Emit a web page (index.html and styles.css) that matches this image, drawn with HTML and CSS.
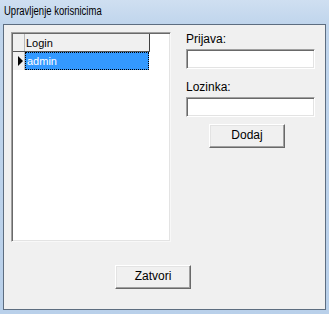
FILE: index.html
```html
<!DOCTYPE html>
<html>
<head>
<meta charset="utf-8">
<link rel="stylesheet" href="styles.css">
</head>
<body>
<div class="window">
  <div class="titlebar"><span class="title-text">Upravljenje korisnicima</span></div>
  <div class="client">
    <div class="top">
      <div class="grid">
        <div class="grid-row header">
          <div class="rowhead"></div>
          <div class="cell colhead">Login</div>
        </div>
        <div class="grid-row data">
          <div class="rowhead"><span class="arrow"></span></div>
          <div class="cell selected">admin</div>
        </div>
      </div>
      <div class="form">
        <div class="lbl">Prijava:</div>
        <div class="textbox"></div>
        <div class="lbl lbl-second">Lozinka:</div>
        <div class="textbox"></div>
        <div class="btn btn-add">Dodaj</div>
      </div>
    </div>
    <div class="bottom">
      <div class="btn btn-close">Zatvori</div>
    </div>
  </div>
</div>
</body>
</html>
```
FILE: styles.css
```css
html, body {
  margin: 0;
  padding: 0;
  background: #bcd3eb;
}
.window {
  width: 329px;
  height: 314px;
  box-sizing: border-box;
  padding: 0 3px 4px 3px;
  background: linear-gradient(#cfdff1, #c0d5ec 24px, #b9d0ea);
  font-family: "Liberation Sans", Arial, sans-serif;
  display: flex;
  flex-direction: column;
}
.titlebar {
  height: 24px;
  line-height: 23px;
  padding-left: 1px;
  font-size: 12.5px;
  color: #000;
  flex: none;
  white-space: nowrap;
}
.title-text {
  display: inline-block;
  transform: scaleX(0.76);
  transform-origin: left center;
}
.client {
  flex: 1;
  background: #f0f0f0;
  border: 1px solid #5d6d80;
  padding: 7px;
}
.top {
  display: flex;
  align-items: flex-start;
  gap: 15px;
}
.grid {
  width: 160px;
  height: 210px;
  box-sizing: border-box;
  background: #fff;
  border-top: 1px solid #a0a0a0;
  border-left: 1px solid #a0a0a0;
  border-right: 1px solid #f8f8f8;
  border-bottom: 1px solid #f8f8f8;
  box-shadow: inset 1px 1px 0 #696969, inset -1px -1px 0 #e3e3e3;
  padding: 1px 0 0 1px;
  font-size: 11px;
}
.grid-row {
  display: flex;
  width: 137px;
}
.header {
  height: 18px;
  box-sizing: border-box;
  border-bottom: 1px solid #555;
}
.rowhead {
  width: 11px;
  flex: none;
  background: #f0f0f0;
  border-right: 1px solid #b8b8b8;
  display: flex;
  align-items: center;
  justify-content: flex-end;
}
.cell {
  flex: 1;
  box-sizing: border-box;
  line-height: 16px;
  padding-left: 1px;
}
.colhead {
  background: #f0f0f0;
  border-right: 1px solid #404040;
  line-height: 18px;
}
.data {
  height: 18px;
}
.selected {
  background: #3399ff;
  color: #fff;
  border: 1px dotted #000;
  width: 124px;
  flex: none;
}
.arrow {
  width: 0;
  height: 0;
  border-top: 5px solid transparent;
  border-bottom: 5px solid transparent;
  border-left: 5px solid #000;
  margin-right: 1px;
}
.form {
  display: flex;
  flex-direction: column;
  align-items: flex-start;
  width: 129px;
}
.lbl {
  font-size: 12px;
  line-height: 14px;
  color: #000;
}
.lbl-second {
  margin-top: 11px;
}
.textbox {
  width: 129px;
  height: 20px;
  box-sizing: border-box;
  margin-top: 3px;
  background: #fff;
  border-top: 1px solid #a0a0a0;
  border-left: 1px solid #a0a0a0;
  border-right: 1px solid #fff;
  border-bottom: 1px solid #fff;
  box-shadow: inset 1px 1px 0 #696969, inset -1px -1px 0 #e3e3e3;
}
.btn {
  width: 76px;
  height: 24px;
  box-sizing: border-box;
  background: #f0f0f0;
  border-top: 1px solid #fff;
  border-left: 1px solid #fff;
  border-right: 1px solid #696969;
  border-bottom: 1px solid #696969;
  box-shadow: inset -1px -1px 0 #a0a0a0, inset 1px 1px 0 #e3e3e3;
  font-size: 12px;
  line-height: 21px;
  text-align: center;
  color: #000;
}
.btn-add {
  margin-top: 7px;
  margin-left: 23px;
}
.bottom {
  margin-top: 23px;
  padding-left: 104px;
}
```
